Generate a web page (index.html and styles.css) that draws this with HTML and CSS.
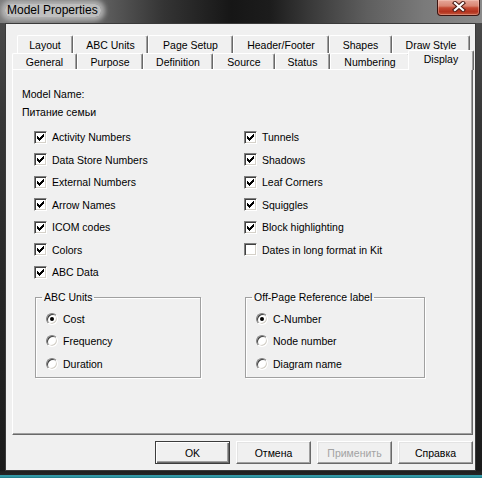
FILE: index.html
```html
<!DOCTYPE html>
<html>
<head>
<meta charset="utf-8">
<title>Model Properties</title>
<link rel="stylesheet" href="styles.css">
</head>
<body>
<div class="window">
  <div class="titlebar">
    <span class="title">Model Properties</span>
    <div class="close">
      <svg width="14" height="11" viewBox="0 0 14 11">
        <path d="M3 2 L11 9 M11 2 L3 9" stroke="#4a1a14" stroke-width="4.2" stroke-linecap="square" fill="none"/>
        <path d="M3 2 L11 9 M11 2 L3 9" stroke="#ffffff" stroke-width="2.2" stroke-linecap="square" fill="none"/>
      </svg>
    </div>
  </div>
  <div class="client">
    <div class="tabrow row1">
      <div class="tab t-layout">Layout</div>
      <div class="tab t-abc">ABC Units</div>
      <div class="tab t-page">Page Setup</div>
      <div class="tab t-header">Header/Footer</div>
      <div class="tab t-shapes">Shapes</div>
      <div class="tab t-draw">Draw Style</div>
    </div>
    <div class="tabrow row2">
      <div class="tab t-general">General</div>
      <div class="tab t-purpose">Purpose</div>
      <div class="tab t-definition">Definition</div>
      <div class="tab t-source">Source</div>
      <div class="tab t-status">Status</div>
      <div class="tab t-numbering">Numbering</div>
      <div class="tab t-display selected">Display</div>
    </div>
    <div class="panel">
      <div class="line model-label">Model Name:</div>
      <div class="line model-name">Питание семьи</div>
      <div class="checks">
        <div class="col">
          <div class="cbrow"><span class="cb"><svg class="tick" width="7" height="7" viewBox="0 0 7 7"><path d="M6 0h1v1H6zM5 1h2v1H5zM0 2h1v1H0zM4 2h3v1H4zM0 3h2v1H0zM3 3h3v1H3zM0 4h5v1H0zM1 5h3v1H1zM2 6h1v1H2z"/></svg></span>Activity Numbers</div>
          <div class="cbrow"><span class="cb"><svg class="tick" width="7" height="7" viewBox="0 0 7 7"><path d="M6 0h1v1H6zM5 1h2v1H5zM0 2h1v1H0zM4 2h3v1H4zM0 3h2v1H0zM3 3h3v1H3zM0 4h5v1H0zM1 5h3v1H1zM2 6h1v1H2z"/></svg></span>Data Store Numbers</div>
          <div class="cbrow"><span class="cb"><svg class="tick" width="7" height="7" viewBox="0 0 7 7"><path d="M6 0h1v1H6zM5 1h2v1H5zM0 2h1v1H0zM4 2h3v1H4zM0 3h2v1H0zM3 3h3v1H3zM0 4h5v1H0zM1 5h3v1H1zM2 6h1v1H2z"/></svg></span>External Numbers</div>
          <div class="cbrow"><span class="cb"><svg class="tick" width="7" height="7" viewBox="0 0 7 7"><path d="M6 0h1v1H6zM5 1h2v1H5zM0 2h1v1H0zM4 2h3v1H4zM0 3h2v1H0zM3 3h3v1H3zM0 4h5v1H0zM1 5h3v1H1zM2 6h1v1H2z"/></svg></span>Arrow Names</div>
          <div class="cbrow"><span class="cb"><svg class="tick" width="7" height="7" viewBox="0 0 7 7"><path d="M6 0h1v1H6zM5 1h2v1H5zM0 2h1v1H0zM4 2h3v1H4zM0 3h2v1H0zM3 3h3v1H3zM0 4h5v1H0zM1 5h3v1H1zM2 6h1v1H2z"/></svg></span>ICOM codes</div>
          <div class="cbrow"><span class="cb"><svg class="tick" width="7" height="7" viewBox="0 0 7 7"><path d="M6 0h1v1H6zM5 1h2v1H5zM0 2h1v1H0zM4 2h3v1H4zM0 3h2v1H0zM3 3h3v1H3zM0 4h5v1H0zM1 5h3v1H1zM2 6h1v1H2z"/></svg></span>Colors</div>
          <div class="cbrow"><span class="cb"><svg class="tick" width="7" height="7" viewBox="0 0 7 7"><path d="M6 0h1v1H6zM5 1h2v1H5zM0 2h1v1H0zM4 2h3v1H4zM0 3h2v1H0zM3 3h3v1H3zM0 4h5v1H0zM1 5h3v1H1zM2 6h1v1H2z"/></svg></span>ABC Data</div>
        </div>
        <div class="col">
          <div class="cbrow"><span class="cb"><svg class="tick" width="7" height="7" viewBox="0 0 7 7"><path d="M6 0h1v1H6zM5 1h2v1H5zM0 2h1v1H0zM4 2h3v1H4zM0 3h2v1H0zM3 3h3v1H3zM0 4h5v1H0zM1 5h3v1H1zM2 6h1v1H2z"/></svg></span>Tunnels</div>
          <div class="cbrow"><span class="cb"><svg class="tick" width="7" height="7" viewBox="0 0 7 7"><path d="M6 0h1v1H6zM5 1h2v1H5zM0 2h1v1H0zM4 2h3v1H4zM0 3h2v1H0zM3 3h3v1H3zM0 4h5v1H0zM1 5h3v1H1zM2 6h1v1H2z"/></svg></span>Shadows</div>
          <div class="cbrow"><span class="cb"><svg class="tick" width="7" height="7" viewBox="0 0 7 7"><path d="M6 0h1v1H6zM5 1h2v1H5zM0 2h1v1H0zM4 2h3v1H4zM0 3h2v1H0zM3 3h3v1H3zM0 4h5v1H0zM1 5h3v1H1zM2 6h1v1H2z"/></svg></span>Leaf Corners</div>
          <div class="cbrow"><span class="cb"><svg class="tick" width="7" height="7" viewBox="0 0 7 7"><path d="M6 0h1v1H6zM5 1h2v1H5zM0 2h1v1H0zM4 2h3v1H4zM0 3h2v1H0zM3 3h3v1H3zM0 4h5v1H0zM1 5h3v1H1zM2 6h1v1H2z"/></svg></span>Squiggles</div>
          <div class="cbrow"><span class="cb"><svg class="tick" width="7" height="7" viewBox="0 0 7 7"><path d="M6 0h1v1H6zM5 1h2v1H5zM0 2h1v1H0zM4 2h3v1H4zM0 3h2v1H0zM3 3h3v1H3zM0 4h5v1H0zM1 5h3v1H1zM2 6h1v1H2z"/></svg></span>Block highlighting</div>
          <div class="cbrow"><span class="cb"></span>Dates in long format in Kit</div>
        </div>
      </div>
      <div class="groups">
        <fieldset class="group g-abc">
          <legend>ABC Units</legend>
          <div class="opts">
            <div class="rbrow"><span class="rb on"></span>Cost</div>
            <div class="rbrow"><span class="rb"></span>Frequency</div>
            <div class="rbrow"><span class="rb"></span>Duration</div>
          </div>
        </fieldset>
        <fieldset class="group g-ref">
          <legend>Off-Page Reference label</legend>
          <div class="opts">
            <div class="rbrow"><span class="rb on"></span>C-Number</div>
            <div class="rbrow"><span class="rb"></span>Node number</div>
            <div class="rbrow"><span class="rb"></span>Diagram name</div>
          </div>
        </fieldset>
      </div>
    </div>
    <div class="buttons">
      <div class="btn default">OK</div>
      <div class="btn">Отмена</div>
      <div class="btn disabled">Применить</div>
      <div class="btn">Справка</div>
    </div>
  </div>
  <div class="bottom"></div>
</div>
</body>
</html>
```

FILE: styles.css
```css
* { box-sizing: border-box; }
html, body { margin: 0; padding: 0; }
body {
  width: 482px;
  height: 478px;
  overflow: hidden;
  background: #1e1e1e;
  font-family: "Liberation Sans", Arial, sans-serif;
  font-size: 10.5px;
  color: #000;
}
.window {
  width: 482px;
  height: 478px;
  display: flex;
  flex-direction: column;
  background: linear-gradient(to bottom, #4e4e4e 0, #363636 25%, #262626 60%, #1a1a1a 100%);
}
.titlebar {
  height: 23px;
  flex: none;
  display: flex;
  justify-content: space-between;
  align-items: flex-start;
  background: linear-gradient(to right, #7c7c7c 0%, #6a6a6a 18%, #343434 34%, #161616 48%, #1c1c1c 56%, #383838 64%, #5e5e5e 76%, #7a7a7a 88%, #8a8a8a 100%);
}
.title {
  display: inline-block;
  font-size: 12px;
  line-height: 13px;
  margin: 4px 0 0 5px;
  padding: 0 3px 0 2px;
  color: #000;
  background: rgba(205,205,205,0.85);
  border-radius: 6px;
  box-shadow: 0 0 5px 4px rgba(200,200,200,0.75);
}
.close {
  width: 43px;
  height: 16px;
  margin-right: 2px;
  border: 1px solid #3c1410;
  border-top: none;
  border-radius: 0 0 4px 4px;
  background: linear-gradient(to bottom, #e6a89a 0%, #d98572 40%, #c34a33 52%, #b3321e 78%, #c45a3e 100%);
  box-shadow: inset 0 0 0 1px rgba(255,220,210,0.35);
  display: flex;
  align-items: center;
  justify-content: center;
}
.close svg { display: block; margin-top: -2px; }

.client {
  flex: none;
  height: 448px;
  margin: 0 6px 0 5px;
  border: 1px solid #3a3a3a;
  background: #f0f0f0;
  padding: 11px 1px 6px 6px;
  display: flex;
  flex-direction: column;
}

.tabrow { display: flex; flex: none; }
.row1 { height: 18px; margin-left: 5px; }
.row2 { height: 16px; }
.tab {
  display: flex;
  align-items: center;
  justify-content: center;
  background: #f0f0f0;
  border-top: 1px solid #fff;
  border-left: 1px solid #fff;
  border-right: 1px solid #696969;
  box-shadow: inset -1px 0 0 #a0a0a0;
  border-radius: 2px 2px 0 0;
  white-space: nowrap;
}
.row1 .tab { padding-top: 1px; }
.t-layout { width: 56px; }
.t-abc { width: 75px; }
.t-page { width: 85px; }
.t-header { width: 96px; }
.t-shapes { width: 63px; }
.t-draw { width: 78px; }
.t-general { width: 65px; }
.t-purpose { width: 66px; }
.t-definition { width: 70px; }
.t-source { width: 62px; }
.t-status { width: 55px; }
.t-numbering { width: 80px; }
.t-display { width: 62px; }
.tab.selected {
  width: 66px;
  margin: -3px -2px -1px -2px;
  position: relative;
  z-index: 1;
  align-items: flex-start;
  padding-top: 2px;
}

.panel {
  flex: none;
  width: 461px;
  height: 366px;
  border-style: solid;
  border-width: 1px;
  border-color: #fff #696969 #696969 #fff;
  box-shadow: inset -1px -1px 0 #a0a0a0;
}
.line { line-height: 18px; padding-left: 9px; }
.model-label { margin-top: 15px; }

.checks {
  display: grid;
  grid-template-columns: 210px 1fr;
  margin-top: 4.75px;
  padding-left: 21px;
}
.cbrow {
  height: 22.5px;
  display: flex;
  align-items: center;
  white-space: nowrap;
}
.cb {
  width: 13px;
  height: 13px;
  flex: none;
  margin-right: 5px;
  border: 1px solid;
  border-color: #808080 #fff #fff #808080;
  box-shadow: inset 1px 1px 0 #404040, inset -1px -1px 0 #d4d0c8;
  background: #fff;
  display: flex;
  align-items: center;
  justify-content: center;
}
.tick { display: block; fill: #000; shape-rendering: crispEdges; }

.groups {
  display: flex;
  gap: 44px;
  margin-top: 7.25px;
  padding-left: 22px;
}
.group {
  margin: 0;
  padding: 0;
  min-width: 0;
  border: 1px solid #a0a0a0;
  box-shadow: 1px 1px 0 #fff, inset 1px 1px 0 #fff;
}
.g-abc { width: 166px; }
.g-ref { width: 180px; }
.group legend {
  margin-left: 6px;
  padding: 0 2px;
  line-height: 13px;
}
.opts {
  padding: 3.75px 0 2px 10px;
}
.rbrow {
  height: 22.5px;
  display: flex;
  align-items: center;
  white-space: nowrap;
}
.rb {
  width: 12px;
  height: 12px;
  flex: none;
  margin-right: 5px;
  border-radius: 50%;
  border: 1px solid;
  border-color: #808080 #fff #fff #808080;
  box-shadow: inset 1px 1px 0 #404040, inset -1px -1px 0 #d4d0c8;
  background: #fff;
  display: flex;
  align-items: center;
  justify-content: center;
}
.rb.on::after {
  content: "";
  width: 4px;
  height: 4px;
  border-radius: 50%;
  background: #000;
}

.buttons {
  display: flex;
  justify-content: flex-end;
  gap: 6px;
  margin-top: 6px;
  margin-right: 1px;
}
.btn {
  width: 75px;
  height: 23px;
  border: 1px solid;
  border-color: #fff #696969 #696969 #fff;
  box-shadow: inset -1px -1px 0 #a0a0a0, inset 1px 1px 0 #e3e3e3;
  background: #f0f0f0;
  display: flex;
  align-items: center;
  justify-content: center;
  white-space: nowrap;
}
.btn.default {
  border-color: #3c3c3c;
  box-shadow: inset 1px 1px 0 #fff, inset -1px -1px 0 #696969, inset -2px -2px 0 #a0a0a0;
}
.btn.disabled { color: #a3a3a3; }

.bottom {
  flex: 1;
  background: linear-gradient(to bottom, #1e1e1e 0, #242424 4px, #2f8f9c 4px, #37a2ae 5px, #1f7482 7px);
}
```
